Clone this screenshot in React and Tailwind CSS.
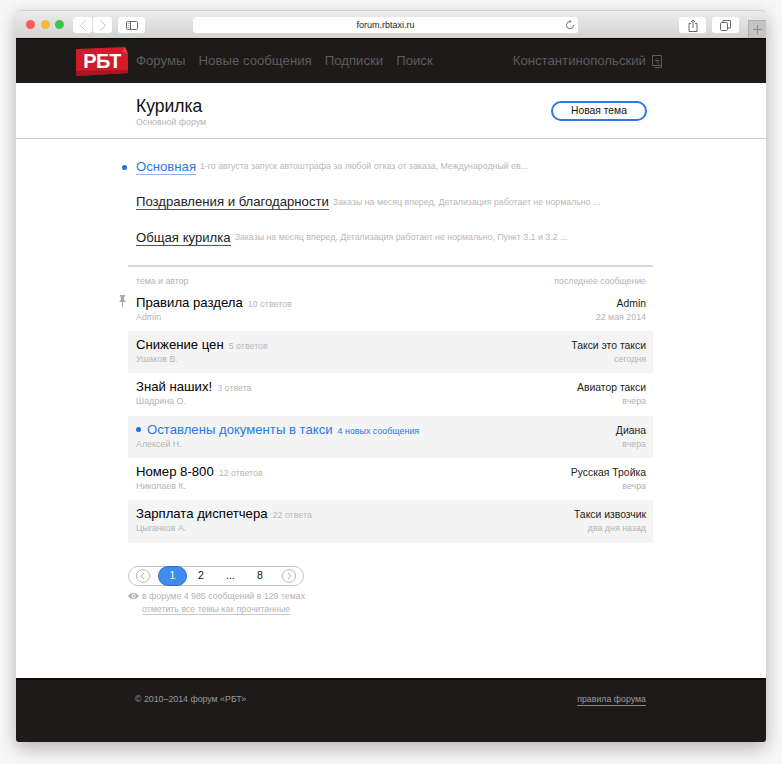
const font = { fontFamily: '"Liberation Sans", Arial, sans-serif' };

const forums = [
  { name: "Основная", text: "1-го августа запуск автоштрафа за любой отказ от заказа, Международный ев...", active: true },
  { name: "Поздравления и благодарности", text: "Заказы на месяц вперед, Детализация работает не нормально ..." },
  { name: "Общая курилка", text: "Заказы на месяц вперед, Детализация работает не нормально, Пункт 3.1 и 3.2 ..." },
];

const topics = [
  { title: "Правила раздела", count: "10 ответов", author: "Admin", last: "Admin", date: "22 мая 2014", pin: true },
  { title: "Снижение цен", count: "5 ответов", author: "Ушаков В.", last: "Такси это такси", date: "сегодня", shade: true },
  { title: "Знай наших!", count: "3 ответа", author: "Шадрина О.", last: "Авиатор такси", date: "вчера" },
  { title: "Оставлены документы в такси", count: "4 новых сообщения", author: "Алексей Н.", last: "Диана", date: "вчера", shade: true, unread: true },
  { title: "Номер 8-800", count: "12 ответов", author: "Николаев К.", last: "Русская Тройка", date: "вечра" },
  { title: "Зарплата диспетчера", count: "22 ответа", author: "Цыганков А.", last: "Такси извозчик", date: "два дня назад", shade: true },
];

function ToolBtn({ className, children }) {
  return <div className={"h-4 bg-white rounded-[3px] flex items-center justify-center " + className}>{children}</div>;
}

function Toolbar() {
  return (
    <div className="h-[28px] shrink-0 flex items-start pt-[6px] pl-[10px] bg-gradient-to-b from-[#ececec] to-[#d2d2d2] rounded-t-[5px] relative border-t border-[#d0d0d0]">
      <div className="flex gap-[5.500px] mt-[3px] w-[47px]">
        <span className="w-[9px] h-[9px] rounded-full bg-[#fc5b57]" />
        <span className="w-[9px] h-[9px] rounded-full bg-[#f5b93a]" />
        <span className="w-[9px] h-[9px] rounded-full bg-[#3cc548]" />
      </div>
      <ToolBtn className="w-[19px]">
        <svg width="8" height="11" viewBox="0 0 8 11" fill="none" stroke="#c4c4c4" strokeWidth="1"><path d="M6.500 .5 1.500 5.500 6.500 10.500" /></svg>
      </ToolBtn>
      <ToolBtn className="w-[19px] ml-px">
        <svg width="8" height="11" viewBox="0 0 8 11" fill="none" stroke="#c4c4c4" strokeWidth="1"><path d="M1.500 .5 6.500 5.500 1.500 10.500" /></svg>
      </ToolBtn>
      <ToolBtn className="w-[27px] ml-[6px]">
        <svg width="12" height="9" viewBox="0 0 12 9" fill="none" stroke="#6a6a6a" strokeWidth="1"><rect x=".5" y=".5" width="11" height="8" rx="1" /><path d="M4.500 .5v8" /><path d="M1.500 2.500h2M1.500 4.500h2M1.500 6.500h2" stroke="#aaa" /></svg>
      </ToolBtn>
      <div className="ml-[48px] w-[385px] h-4 bg-white rounded-[3px] flex items-center relative">
        <span className="w-full text-center text-[9px] text-[#222] leading-4">forum.rbtaxi.ru</span>
        <svg className="absolute right-[3px] top-[3px]" width="10" height="10" viewBox="0 0 10 10" fill="none" stroke="#777" strokeWidth="1"><path d="M5 1.500a3.600 3.600 0 1 0 3.600 3.600" /><path d="M4.600 0 6.600 1.500 4.600 3" fill="#777" stroke="none" /></svg>
      </div>
      <ToolBtn className="w-[27px] ml-[101px]">
        <svg width="10" height="13" viewBox="0 0 10 13" fill="none" stroke="#6a6a6a" strokeWidth="1"><path d="M3 4.500H1v8h8v-8H7" /><path d="M5 9V1M3 3l2-2 2 2" /></svg>
      </ToolBtn>
      <ToolBtn className="w-[27px] ml-[6px]">
        <svg width="11" height="11" viewBox="0 0 11 11" fill="none" stroke="#6a6a6a" strokeWidth="1"><rect x=".5" y="2.500" width="7" height="8" rx="1" /><path d="M3 2.500V.5h7.500v7.500H8" /></svg>
      </ToolBtn>
      <div className="absolute right-0 bottom-0 w-[18px] h-[18px] bg-[#c4c4c4] border-l border-t border-[#aeaeae] flex items-center justify-center">
        <svg width="9" height="9" viewBox="0 0 9 9" stroke="#8a8a8a" strokeWidth="1"><path d="M4.500 0v9M0 4.500h9" /></svg>
      </div>
    </div>
  );
}

function Logo() {
  return (
    <div className="relative w-[52px] h-[30px] shrink-0 flex items-center justify-center">
      <svg className="absolute inset-0" width="52" height="30" viewBox="0 0 52 30">
        <path d="M0 3 24 2 49 1 52 8 52 27 1 30 0 28Z" fill="#cf1c2b" />
        <path d="M0 25 52 24 52 27 1 30 0 28Z" fill="#a81622" />
        <path d="M49 1 52 8 46 5Z" fill="#e2404a" />
      </svg>
      <span className="relative -top-[0.5px] text-white font-bold text-[20px] leading-none tracking-[-0.6px]">РБТ</span>
    </div>
  );
}

function Nav() {
  return (
    <div className="h-[45px] shrink-0 bg-[#1e1a1a] border-t border-black flex items-center pl-[60px] text-[13.200px] text-[#5c5c5c]">
      <Logo />
      <div className="flex gap-[13px] ml-2">
        <span>Форумы</span>
        <span>Новые сообщения</span>
        <span>Подписки</span>
        <span>Поиск</span>
      </div>
      <span className="ml-[80px]">Константинопольский</span>
      <svg className="ml-[6px]" width="10" height="13" viewBox="0 0 10 13" fill="none" stroke="#5c5c5c" strokeWidth="1"><path d="M.5 .5h9v10h-9zM2.500 12.500h7V11" /><path d="M5 3v1M3 5.500h4L5 7.500l2 2" /></svg>
    </div>
  );
}

function Header() {
  return (
    <div className="h-[56px] shrink-0 border-b border-[#cfcfcf] flex items-start justify-between pl-[120px] pr-[119px] pt-[13px]">
      <div>
        <div className="text-[17.500px] leading-[21px] text-[#111]">Курилка</div>
        <div className="text-[8.800px] leading-[11px] text-[#b4b4b4]">Основной форум</div>
      </div>
      <div className="mt-[5px] w-[96px] h-[20px] rounded-full border-2 border-[#2a7ae2] text-[10.300px] text-[#111] flex items-center justify-center">Новая тема</div>
    </div>
  );
}

function Forums() {
  return (
    <div className="pl-[120px] pt-[10px] flex flex-col">
      {forums.map((f) => (
        <div key={f.name} className="h-[35.500px] flex items-center relative">
          {f.active && <span className="absolute left-[-14px] top-[16px] w-[5px] h-[5px] rounded-full bg-[#1f6fe0]" />}
          <span className={"text-[13.150px] leading-[15px] border-b " + (f.active ? "text-[#2a7ae2] border-[#8db8ee]" : "text-[#222] border-[#555]")}>{f.name}</span>
          <span className="ml-[4px] text-[8.800px] text-[#b8b8b8]">{f.text}</span>
        </div>
      ))}
    </div>
  );
}

function Row({ t }) {
  return (
    <div className={"relative h-[42.400px] flex justify-between pl-2 pr-[7px] pt-[5px] " + (t.shade ? "bg-[#f4f4f4]" : "")}>
      {t.pin && (
        <svg className="absolute left-[-9px] top-[6px]" width="7" height="12" viewBox="0 0 7 12" fill="#a8a8a8"><path d="M1 0h5v1L5.200 2v3L7 7H4v5H3V7H0l1.800-2V2L1 1Z" /></svg>
      )}
      <div>
        <div className="flex items-baseline">
          {t.unread && <span className="w-[5px] h-[5px] rounded-full bg-[#1f6fe0] mr-[6px] self-center" />}
          <span className={"text-[13.150px] leading-[18px] " + (t.unread ? "text-[#2a7ae2]" : "text-[#000]")}>{t.title}</span>
          <span className={"ml-[5px] text-[8.900px] " + (t.unread ? "text-[#2a7ae2]" : "text-[#b8b8b8]")}>{t.count}</span>
        </div>
        <div className="text-[8.900px] leading-[13px] text-[#b4b4b4] -mt-[1px]">{t.author}</div>
      </div>
      <div className="text-right pt-[1px]">
        <div className="text-[10.400px] leading-[18px] text-[#222]">{t.last}</div>
        <div className="text-[8.850px] leading-[13px] text-[#b4b4b4] -mt-[2px]">{t.date}</div>
      </div>
    </div>
  );
}

function Table() {
  return (
    <div className="ml-[112px] mt-[9px] w-[525px]">
      <div className="border-t-2 border-[#d8d8d8] h-[24px] flex justify-between pl-2 pr-[7px] pt-[8px] text-[8.750px] leading-[13px] text-[#b4b4b4]">
        <span>тема и автор</span>
        <span>последнее сообщение</span>
      </div>
      {topics.map((t) => <Row key={t.title} t={t} />)}
    </div>
  );
}

function Pager() {
  return (
    <div className="ml-[112px] mt-[23px] text-[8.800px] text-[#b4b4b4]">
      <div className="w-[176px] h-[20px] rounded-full border border-[#c6c6c6] flex items-center relative text-[10.500px] text-[#111]">
        <svg className="absolute left-[7px] top-[2px]" width="14" height="14" viewBox="0 0 14 14" fill="none" stroke="#b4b4b4"><circle cx="7" cy="7" r="6.500" /><path d="M8 4 5 7 8 10" /></svg>
        <span className="absolute left-[29px] top-[-1px] w-[29px] h-[20px] rounded-full bg-[#3f8cee] border border-[#2a70cc] text-white flex items-center justify-center">1</span>
        <span className="absolute left-[69px]">2</span>
        <span className="absolute left-[97px]">...</span>
        <span className="absolute left-[128px]">8</span>
        <svg className="absolute right-[7px] top-[2px]" width="14" height="14" viewBox="0 0 14 14" fill="none" stroke="#b4b4b4"><circle cx="7" cy="7" r="6.500" /><path d="M6 4 9 7 6 10" /></svg>
      </div>
      <div className="flex items-center mt-[4px] h-[13px]">
        <svg width="11" height="8" viewBox="0 0 11 8" className="mr-[3px]"><path d="M0 4C3 0 8 0 11 4 8 8 3 8 0 4Z" fill="#b0b0b0" /><circle cx="5.500" cy="4" r="2" fill="#fff" /><circle cx="5.500" cy="4" r="1" fill="#b0b0b0" /></svg>
        <span>в форуме 4 985 сообщений в 129 темах</span>
      </div>
      <div className="ml-[14px] leading-[12px]"><span className="border-b border-[#c8c8c8]">отметить все темы как прочитанные</span></div>
    </div>
  );
}

function Footer() {
  return (
    <div className="h-[64px] mt-auto shrink-0 bg-[#1e1a1a] border-t-2 border-t-[#0c0a0a] rounded-b-[3px] flex justify-between pl-[119px] pr-[120px] pt-[13px] text-[8.800px] text-[#9a9a9a]">
      <span className="leading-[13px]">© 2010–2014 форум «РБТ»</span>
      <span className="leading-[13px] h-[13px] border-b border-[#8a8a8a]">правила форума</span>
    </div>
  );
}

export default function App() {
  return (
    <div style={font} className="w-[782px] h-[764px] overflow-hidden bg-[#f7f7f7] pt-[10px] pl-4">
      <div className="w-[750px] h-[732px] bg-white rounded-[5px] flex flex-col shadow-[0_6px_18px_rgba(0,0,0,0.28)]">
        <Toolbar />
        <Nav />
        <Header />
        <Forums />
        <Table />
        <Pager />
        <Footer />
      </div>
    </div>
  );
}
